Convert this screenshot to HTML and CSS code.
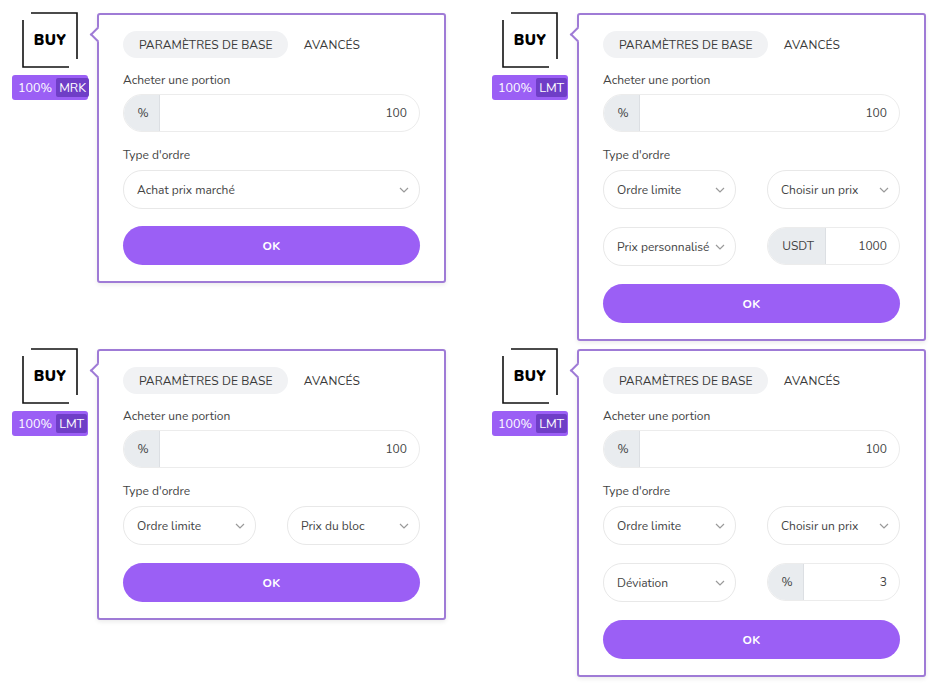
FILE: index.html
```html
<!DOCTYPE html>
<html lang="fr">
<head>
<meta charset="utf-8">
<title>Buy orders</title>
<link rel="stylesheet" href="styles.css">
</head>
<body>
<div class="page">

  <!-- Card 1 -->
  <div class="cell">
    <div class="logo-col">
      <div class="buy">
        <svg class="buy-frame" width="56" height="56" viewBox="0 0 56 56"><path d="M9 1H55V47M1 8V55H47" fill="none" stroke="#111" stroke-width="1.6"/></svg>
        <span>BUY</span>
      </div>
      <div class="badge">100% <span class="badge-type">MRK</span></div>
    </div>
    <div class="panel">
      <div class="tabs"><span class="tab active">PARAMÈTRES DE BASE</span><span class="tab">AVANCÉS</span></div>
      <div class="label">Acheter une portion</div>
      <div class="igroup"><span class="addon">%</span><span class="val">100</span></div>
      <div class="label label-type">Type d'ordre</div>
      <div class="row"><div class="select">Achat prix marché<svg class="chev" width="10" height="6" viewBox="0 0 10 6"><path d="M1 1L5 5L9 1" fill="none" stroke="#9a9a9a" stroke-width="1.2"/></svg></div></div>
      <button class="ok">OK</button>
    </div>
  </div>

  <!-- Card 2 -->
  <div class="cell">
    <div class="logo-col">
      <div class="buy">
        <svg class="buy-frame" width="56" height="56" viewBox="0 0 56 56"><path d="M9 1H55V47M1 8V55H47" fill="none" stroke="#111" stroke-width="1.6"/></svg>
        <span>BUY</span>
      </div>
      <div class="badge">100% <span class="badge-type">LMT</span></div>
    </div>
    <div class="panel">
      <div class="tabs"><span class="tab active">PARAMÈTRES DE BASE</span><span class="tab">AVANCÉS</span></div>
      <div class="label">Acheter une portion</div>
      <div class="igroup"><span class="addon">%</span><span class="val">100</span></div>
      <div class="label label-type">Type d'ordre</div>
      <div class="row two">
        <div class="select">Ordre limite<svg class="chev" width="10" height="6" viewBox="0 0 10 6"><path d="M1 1L5 5L9 1" fill="none" stroke="#9a9a9a" stroke-width="1.2"/></svg></div>
        <div class="select">Choisir un prix<svg class="chev" width="10" height="6" viewBox="0 0 10 6"><path d="M1 1L5 5L9 1" fill="none" stroke="#9a9a9a" stroke-width="1.2"/></svg></div>
      </div>
      <div class="row two">
        <div class="select">Prix personnalisé<svg class="chev" width="10" height="6" viewBox="0 0 10 6"><path d="M1 1L5 5L9 1" fill="none" stroke="#9a9a9a" stroke-width="1.2"/></svg></div>
        <div class="igroup"><span class="addon wide">USDT</span><span class="val">1000</span></div>
      </div>
      <button class="ok">OK</button>
    </div>
  </div>

  <!-- Card 3 -->
  <div class="cell">
    <div class="logo-col">
      <div class="buy">
        <svg class="buy-frame" width="56" height="56" viewBox="0 0 56 56"><path d="M9 1H55V47M1 8V55H47" fill="none" stroke="#111" stroke-width="1.6"/></svg>
        <span>BUY</span>
      </div>
      <div class="badge">100% <span class="badge-type">LMT</span></div>
    </div>
    <div class="panel">
      <div class="tabs"><span class="tab active">PARAMÈTRES DE BASE</span><span class="tab">AVANCÉS</span></div>
      <div class="label">Acheter une portion</div>
      <div class="igroup"><span class="addon">%</span><span class="val">100</span></div>
      <div class="label label-type">Type d'ordre</div>
      <div class="row two">
        <div class="select">Ordre limite<svg class="chev" width="10" height="6" viewBox="0 0 10 6"><path d="M1 1L5 5L9 1" fill="none" stroke="#9a9a9a" stroke-width="1.2"/></svg></div>
        <div class="select">Prix du bloc<svg class="chev" width="10" height="6" viewBox="0 0 10 6"><path d="M1 1L5 5L9 1" fill="none" stroke="#9a9a9a" stroke-width="1.2"/></svg></div>
      </div>
      <button class="ok">OK</button>
    </div>
  </div>

  <!-- Card 4 -->
  <div class="cell">
    <div class="logo-col">
      <div class="buy">
        <svg class="buy-frame" width="56" height="56" viewBox="0 0 56 56"><path d="M9 1H55V47M1 8V55H47" fill="none" stroke="#111" stroke-width="1.6"/></svg>
        <span>BUY</span>
      </div>
      <div class="badge">100% <span class="badge-type">LMT</span></div>
    </div>
    <div class="panel">
      <div class="tabs"><span class="tab active">PARAMÈTRES DE BASE</span><span class="tab">AVANCÉS</span></div>
      <div class="label">Acheter une portion</div>
      <div class="igroup"><span class="addon">%</span><span class="val">100</span></div>
      <div class="label label-type">Type d'ordre</div>
      <div class="row two">
        <div class="select">Ordre limite<svg class="chev" width="10" height="6" viewBox="0 0 10 6"><path d="M1 1L5 5L9 1" fill="none" stroke="#9a9a9a" stroke-width="1.2"/></svg></div>
        <div class="select">Choisir un prix<svg class="chev" width="10" height="6" viewBox="0 0 10 6"><path d="M1 1L5 5L9 1" fill="none" stroke="#9a9a9a" stroke-width="1.2"/></svg></div>
      </div>
      <div class="row two">
        <div class="select">Déviation<svg class="chev" width="10" height="6" viewBox="0 0 10 6"><path d="M1 1L5 5L9 1" fill="none" stroke="#9a9a9a" stroke-width="1.2"/></svg></div>
        <div class="igroup"><span class="addon">%</span><span class="val">3</span></div>
      </div>
      <button class="ok">OK</button>
    </div>
  </div>

</div>
</body>
</html>
```
FILE: styles.css
```css
* { box-sizing: border-box; }

html, body {
  margin: 0;
  padding: 0;
  background: #ffffff;
}

body {
  font-family: "Nunito", "Lato", "Open Sans", sans-serif;
  color: #3a3a3a;
  width: 945px;
  height: 691px;
  overflow: hidden;
}

.page {
  display: grid;
  grid-template-columns: 434px 434px;
  column-gap: 46px;
  row-gap: 8px;
  align-items: start;
  padding: 13px 0 0 12px;
}

.cell {
  display: flex;
  align-items: flex-start;
  gap: 9px;
}

.logo-col {
  width: 76px;
  display: flex;
  flex-direction: column;
  align-items: center;
  margin-top: -1px;
}

.buy {
  position: relative;
  width: 56px;
  height: 56px;
  display: flex;
  align-items: center;
  justify-content: center;
  font-weight: 900;
  font-size: 15px;
  letter-spacing: 0.3px;
  color: #000;
}

.buy-frame {
  position: absolute;
  left: 0;
  top: 0;
}

.buy span { position: relative; }

.badge {
  margin-top: 7px;
  width: 76px;
  height: 25px;
  background: #9b5ff5;
  border-radius: 3px;
  color: #fff;
  font-size: 12.5px;
  display: flex;
  align-items: center;
  padding: 0 3px 0 6px;
  gap: 4px;
}

.badge-type {
  background: #6f3ec7;
  border-radius: 2px;
  height: 19px;
  padding: 0 3px;
  flex: 1;
  display: flex;
  align-items: center;
  justify-content: center;
}

.panel {
  position: relative;
  width: 349px;
  border: 2px solid #9f7bd6;
  border-radius: 3px;
  background: #fff;
  padding: 16px 24px 16px 24px;
  display: flex;
  flex-direction: column;
  box-shadow: 0 2px 4px rgba(0, 0, 0, 0.08);
}

.panel::before {
  content: "";
  position: absolute;
  left: -7px;
  top: 14px;
  width: 9px;
  height: 9px;
  background: #fff;
  border-left: 2px solid #9f7bd6;
  border-bottom: 2px solid #9f7bd6;
  transform: rotate(45deg);
}

.tabs {
  display: flex;
  align-items: center;
  height: 27px;
}

.tab {
  font-size: 12px;
  color: #3a3a3a;
  padding: 0 15px 0 16px;
  height: 27px;
  line-height: 28px;
  border-radius: 14px;
  letter-spacing: 0.1px;
}

.tab.active {
  background: #f1f2f4;
}

.label {
  font-size: 12px;
  color: #444;
  line-height: 16px;
  margin-top: 14px;
  margin-bottom: 6px;
}

.label-type {
  margin-top: 15px;
  margin-bottom: 7px;
}

.igroup {
  display: flex;
  height: 38px;
  border: 1px solid #ececec;
  border-radius: 19px;
  overflow: hidden;
  font-size: 12px;
  color: #444;
}

.addon {
  width: 36px;
  flex: none;
  background: #e9ecef;
  border-right: 1px solid #dcdfe3;
  display: flex;
  align-items: center;
  justify-content: center;
  padding-left: 3px;
}

.addon.wide {
  width: 58px;
}

.val {
  flex: 1;
  display: flex;
  align-items: center;
  justify-content: flex-end;
  padding-right: 12px;
}

.row {
  display: flex;
}

.row.two {
  display: grid;
  grid-template-columns: 1fr 1fr;
  column-gap: 31px;
}

.row + .row {
  margin-top: 18px;
}

.row.two > * {
  min-width: 0;
}

.select {
  flex: 1;
  height: 39px;
  border: 1px solid #e8e8e8;
  border-radius: 19px;
  display: flex;
  align-items: center;
  justify-content: space-between;
  padding: 0 10px 0 13px;
  font-size: 12px;
  color: #444;
  white-space: nowrap;
  overflow: hidden;
}

.chev {
  flex: none;
  margin-left: 4px;
}

.ok {
  height: 39px;
  border: none;
  border-radius: 20px;
  background: #9b5ff5;
  color: #fff;
  font-family: inherit;
  font-size: 12px;
  font-weight: 700;
  letter-spacing: 0.3px;
}

.row + .ok {
  margin-top: 17px;
}

.row.two + .ok {
  margin-top: 18px;
}
```
